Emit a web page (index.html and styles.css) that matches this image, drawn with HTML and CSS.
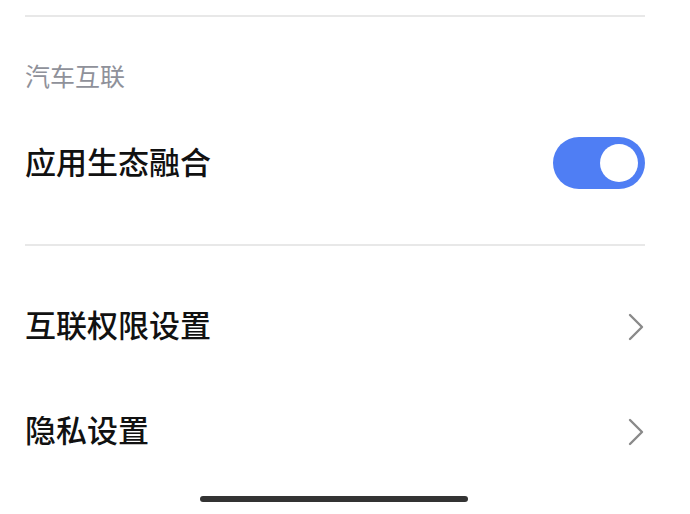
FILE: index.html
```html
<!DOCTYPE html>
<html>
<head>
  <title>汽车互联</title>
  <meta charset="UTF-8" />
  <link rel="stylesheet" href="styles.css">
</head>
<body>
  <div class="page">
    <div class="divider top"></div>

    <div class="section-title">汽车互联</div>

    <div class="row switch-row">
      <span class="label">应用生态融合</span>
      <div class="switch on"><div class="knob"></div></div>
    </div>

    <div class="divider mid"></div>

    <div class="row link-row first">
      <span class="label">互联权限设置</span>
      <svg class="chevron" width="16" height="28" viewBox="0 0 16 28">
        <polyline points="2,2 14,14 2,26" fill="none" stroke="#8a8a8a" stroke-width="2.4" stroke-linecap="round" stroke-linejoin="round"/>
      </svg>
    </div>

    <div class="row link-row">
      <span class="label">隐私设置</span>
      <svg class="chevron" width="16" height="28" viewBox="0 0 16 28">
        <polyline points="2,2 14,14 2,26" fill="none" stroke="#8a8a8a" stroke-width="2.4" stroke-linecap="round" stroke-linejoin="round"/>
      </svg>
    </div>

    <div class="home-bar"></div>
  </div>
</body>
</html>
```

FILE: styles.css
```css
html, body {
  margin: 0;
  padding: 0;
  background: #fff;
}

body {
  font-family: "Noto Sans CJK SC", "Noto Sans", sans-serif;
  color: #111;
}

.page {
  width: 620px;
  padding: 0 45px 0 25px;
  overflow: hidden;
  height: 514px;
}

.divider {
  height: 2px;
  background: #e8e8e8;
}

.divider.top {
  margin-top: 15px;
}

.divider.mid {
  margin-top: 55px;
}

.section-title {
  margin-top: 40px;
  height: 36px;
  line-height: 36px;
  font-size: 25px;
  color: #8f919a;
}

.row {
  display: flex;
  align-items: center;
  justify-content: space-between;
}

.label {
  font-size: 31px;
  font-weight: 500;
  line-height: 40px;
  padding-bottom: 5px;
}

.switch-row {
  margin-top: 44px;
  height: 52px;
}

.switch {
  width: 92px;
  height: 52px;
  border-radius: 26px;
  background: #4f7ef4;
  display: flex;
  align-items: center;
  justify-content: flex-end;
  padding-right: 7px;
  box-sizing: border-box;
}

.knob {
  width: 38px;
  height: 38px;
  border-radius: 50%;
  background: #fff;
}

.link-row {
  height: 105px;
}

.link-row.first {
  margin-top: 28px;
}

.chevron {
  display: block;
  margin-right: 1px;
}

.home-bar {
  margin-top: 12px;
  margin-left: 175px;
  width: 268px;
  height: 6px;
  border-radius: 3px;
  background: #333;
}
```
